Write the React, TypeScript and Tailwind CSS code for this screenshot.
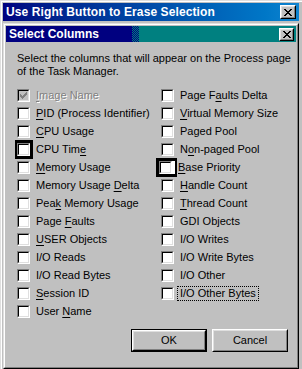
import React from "react";

type Item = {
  label: string;
  key?: number; // index of underlined access letter
  checked?: boolean;
  disabled?: boolean;
  mark?: "small" | "wide";
  focus?: boolean;
};

const leftItems: Item[] = [
  { label: "Image Name", key: 0, checked: true, disabled: true },
  { label: "PID (Process Identifier)", key: 0 },
  { label: "CPU Usage", key: 0 },
  { label: "CPU Time", key: 7, mark: "small" },
  { label: "Memory Usage", key: 0 },
  { label: "Memory Usage Delta", key: 13 },
  { label: "Peak Memory Usage", key: 3 },
  { label: "Page Faults", key: 5 },
  { label: "USER Objects", key: 0 },
  { label: "I/O Reads" },
  { label: "I/O Read Bytes" },
  { label: "Session ID", key: 0 },
  { label: "User Name", key: 5 },
];

const rightItems: Item[] = [
  { label: "Page Faults Delta", key: 6 },
  { label: "Virtual Memory Size", key: 0 },
  { label: "Paged Pool" },
  { label: "Non-paged Pool", key: 1 },
  { label: "Base Priority", key: 0, mark: "wide" },
  { label: "Handle Count", key: 0 },
  { label: "Thread Count", key: 0 },
  { label: "GDI Objects" },
  { label: "I/O Writes" },
  { label: "I/O Write Bytes" },
  { label: "I/O Other" },
  { label: "I/O Other Bytes", focus: true },
];

function CloseButton({ small }: { small?: boolean }) {
  return (
    <div
      className={`flex items-center justify-center bg-[#c0c0c0] border border-t-white border-l-white border-b-black border-r-black ${
        small ? "w-[15px] h-[13px]" : "w-[16px] h-[14px]"
      }`}
    >
      <div className="w-full h-full flex items-center justify-center border border-t-[#dfdfdf] border-l-[#dfdfdf] border-b-[#808080] border-r-[#808080]">
        <svg width="8" height="7" viewBox="0 0 8 7" shapeRendering="crispEdges">
          <path
            d="M0 0h2v1h-2zM6 0h2v1h-2zM1 1h2v1h-2zM5 1h2v1h-2zM2 2h4v1h-4zM3 3h2v1h-2zM2 4h4v1h-4zM1 5h2v1h-2zM5 5h2v1h-2zM0 6h2v1h-2zM6 6h2v1h-2z"
            fill="#000"
          />
        </svg>
      </div>
    </div>
  );
}

function Box({ checked, disabled }: { checked?: boolean; disabled?: boolean }) {
  return (
    <div className="w-[13px] h-[13px] border border-t-[#808080] border-l-[#808080] border-b-white border-r-white shrink-0">
      <div
        className={`w-full h-full border border-t-black border-l-black border-b-[#dfdfdf] border-r-[#dfdfdf] flex items-center justify-center ${
          disabled ? "bg-[#c0c0c0]" : "bg-white"
        }`}
      >
        {checked && (
          <svg width="7" height="7" viewBox="0 0 7 7" shapeRendering="crispEdges">
            <path
              d="M6 0h1v3h-1zM5 1h1v3h-1zM4 2h1v3h-1zM3 3h1v3h-1zM2 4h1v3h-1zM1 3h1v3h-1zM0 2h1v3h-1z"
              fill={disabled ? "#808080" : "#000"}
            />
          </svg>
        )}
      </div>
    </div>
  );
}

function Label({ item }: { item: Item }) {
  const { label, key } = item;
  const text =
    key === undefined ? (
      label
    ) : (
      <>
        {label.slice(0, key)}
        <span className="underline underline-offset-[2px]">{label[key]}</span>
        {label.slice(key + 1)}
      </>
    );
  if (item.focus) {
    return (
      <span className="-ml-[3px] px-[2px] leading-[13px] border border-dotted border-black">
        {text}
      </span>
    );
  }
  return (
    <span
      className={
        item.disabled ? "text-[#808080] [text-shadow:1px_1px_0_#ffffff]" : "text-black"
      }
    >
      {text}
    </span>
  );
}

function Row({ item }: { item: Item }) {
  let box = <Box checked={item.checked} disabled={item.disabled} />;
  if (item.mark === "small") {
    box = (
      <div className="-ml-[2px] -mr-[3px] border-l-2 border-r-[3px] border-y-[3px] border-black -my-[3px]">{box}</div>
    );
  } else if (item.mark === "wide") {
    box = (
      <div className="-ml-[5px] -mr-[5px] border-l-[3px] border-r-[2px] border-y-[3px] border-black -my-[3px] flex bg-white pr-[3px]">
        {box}
      </div>
    );
  }
  return (
    <div className="h-[18px] flex items-center gap-[6px]">
      {box}
      <Label item={item} />
    </div>
  );
}

function Button({ children, primary }: { children: React.ReactNode; primary?: boolean }) {
  return (
    <div className={`w-[76px] h-[23px] ${primary ? "border border-black" : ""}`}>
      <div className="w-full h-full border border-t-white border-l-white border-b-black border-r-black">
        <div className="w-full h-full border border-t-[#dfdfdf] border-l-[#dfdfdf] border-b-[#808080] border-r-[#808080] flex items-center justify-center text-black">
          {children}
        </div>
      </div>
    </div>
  );
}

export default function App() {
  return (
    <div
      className="w-[302px] h-[369px] overflow-hidden bg-[#c0c0c0] border-t border-l border-t-[#dfdfdf] border-l-[#dfdfdf] flex flex-col text-[11px] leading-[13px]"
      style={{ fontFamily: "'Liberation Sans', Arial, sans-serif" }}
    >
      <div className="flex-1 flex flex-col border-t border-l border-t-white border-l-white pl-[1px] pt-[1px] pr-[3px]">
        {/* Outer title bar */}
        <div className="h-[18px] flex items-center pl-[3px] pr-[3px] bg-linear-to-r from-[#000080] to-[#1084d0]">
          <span className="text-white font-bold text-[12px] tracking-[0.1px]">
            Use Right Button to Erase Selection
          </span>
          <div className="ml-auto">
            <CloseButton />
          </div>
        </div>

        {/* Inner dialog */}
        <div className="mt-[2px] flex-1 flex flex-col border border-t-[#dfdfdf] border-l-[#dfdfdf] border-b-black border-r-black">
          <div className="flex-1 flex flex-col border border-t-white border-l-white border-b-[#808080] border-r-[#808080] p-[1px]">
            <div className="h-[16px] flex items-center relative">
              <div className="w-[126px] h-full bg-[#000080]" />
              <div className="w-[7px] h-full bg-[repeating-conic-gradient(#000080_0_25%,#008080_0_50%)] bg-size-[2px_2px]" />
              <div className="flex-1 h-full bg-[#008080] flex items-center justify-end pr-[2px]">
                <CloseButton small />
              </div>
              <span className="absolute left-[3px] top-[1px] text-white font-bold text-[12px] leading-[14px]">
                Select Columns
              </span>
            </div>

            <div className="flex-1 flex flex-col pl-[11px] pt-[10px]">
              <p className="text-black w-[280px]">
                Select the columns that will appear on the Process page of the Task Manager.
              </p>
              <div className="mt-[8px] grid grid-cols-[144px_1fr]">
                <div className="flex flex-col">
                  {leftItems.map((it) => (
                    <Row key={it.label} item={it} />
                  ))}
                </div>
                <div className="flex flex-col">
                  {rightItems.map((it) => (
                    <Row key={it.label} item={it} />
                  ))}
                </div>
              </div>
              <div className="mt-[9px] flex justify-end gap-[5px] pr-[8px]">
                <Button primary>OK</Button>
                <Button>Cancel</Button>
              </div>
            </div>
          </div>
        </div>
      </div>
    </div>
  );
}
